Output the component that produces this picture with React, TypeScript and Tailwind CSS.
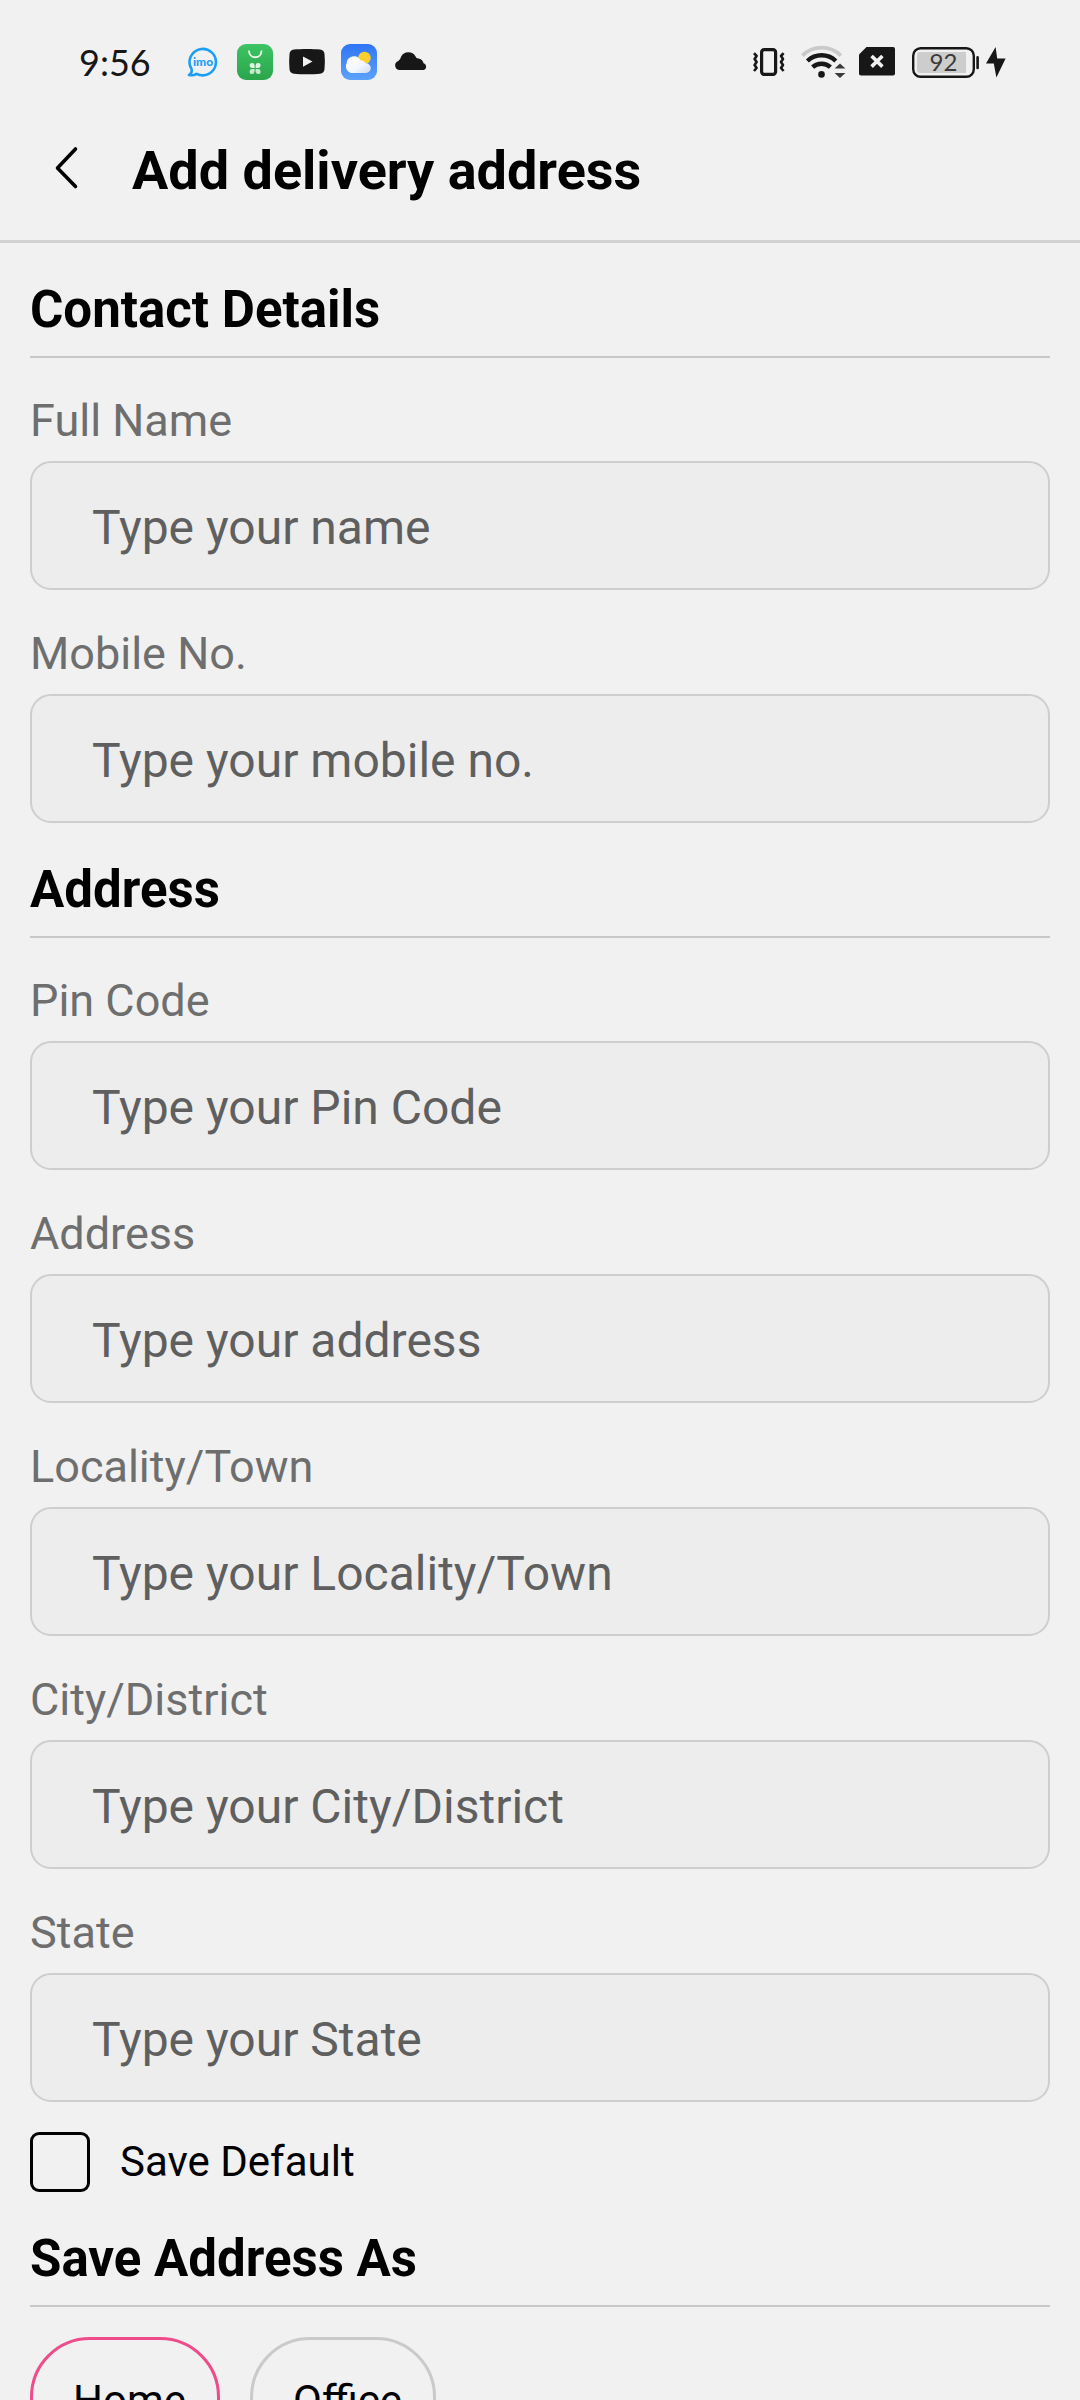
import React, { useState } from "react";

type FieldData = { id: string; label: string; placeholder: string; type?: string };

const contactFields: FieldData[] = [
  { id: "name", label: "Full Name", placeholder: "Type your name" },
  { id: "mobile", label: "Mobile No.", placeholder: "Type your mobile no.", type: "tel" },
];

const addressFields: FieldData[] = [
  { id: "pin", label: "Pin Code", placeholder: "Type your Pin Code" },
  { id: "address", label: "Address", placeholder: "Type your address" },
  { id: "locality", label: "Locality/Town", placeholder: "Type your Locality/Town" },
  { id: "city", label: "City/District", placeholder: "Type your City/District" },
  { id: "state", label: "State", placeholder: "Type your State" },
];

function StatusBar() {
  return (
    <div className="flex h-[124px] shrink-0 items-center justify-between pl-[79px] pr-[74px] text-[#171717]">
      <div className="flex items-center">
        <span className="w-[108px] font-['Lato',sans-serif] text-[36px] leading-[44px]">9:56</span>
        <div className="flex items-center gap-4">
          {/* imo */}
          <svg width="34" height="36" viewBox="0 0 34 36" aria-label="imo">
            <path
              d="M4.6 25.2A13.2 13.2 0 1 1 9.6 29.8C7.4 31.2 4.6 31.6 2 31C4.4 29.6 5.2 27.8 4.6 25.2Z"
              fill="none"
              stroke="#1b9ff5"
              strokeWidth="2.6"
              strokeLinejoin="round"
            />
            <text
              x="16"
              y="22"
              textAnchor="middle"
              fontFamily="Lato, sans-serif"
              fontWeight="900"
              fontSize="12"
              fill="#1b9ff5"
            >
              imo
            </text>
          </svg>
          {/* app market */}
          <svg width="36" height="36" viewBox="0 0 36 36" aria-hidden="true">
            <defs>
              <linearGradient id="market" x1="0" y1="0" x2="0" y2="1">
                <stop offset="0" stopColor="#3dc463" />
                <stop offset="1" stopColor="#2aa54b" />
              </linearGradient>
            </defs>
            <rect width="36" height="36" rx="9" fill="url(#market)" />
            <path d="M12 6.5C12 15.5 24.5 15.5 24.5 6.5" fill="none" stroke="#e9fbe9" strokeWidth="1.8" />
            <g fill="#dff5e2">
              <path d="M17.6 24H15.2A2.5 2.5 0 1 1 17.6 21.4Z" />
              <path d="M18.6 24H21A2.5 2.5 0 1 0 18.6 21.4Z" />
              <path d="M17.6 25H15.2A2.5 2.5 0 1 0 17.6 27.6Z" opacity=".85" />
              <path d="M18.6 25H21A2.5 2.5 0 1 1 18.6 27.6Z" opacity=".85" />
            </g>
          </svg>
          {/* video */}
          <svg width="36" height="36" viewBox="0 0 36 36" aria-hidden="true">
            <path
              d="M5 5.6C12 4.8 24 4.8 31 5.6C34 6 35.2 7.4 35.5 10C36 15 36 20 35.5 25C35.2 28 34 29.3 31 29.7C24 30.5 12 30.5 5 29.7C2 29.3 .8 28 .5 25C0 20 0 15 .5 10C.8 7.4 2 6 5 5.6Z"
              fill="#171717"
            />
            <path d="M14 12.5L23.5 17.6L14 22.8Z" fill="#f1f1f1" />
          </svg>
          {/* weather */}
          <svg width="36" height="36" viewBox="0 0 36 36" aria-hidden="true">
            <defs>
              <linearGradient id="sky" x1="0" y1="0" x2="0" y2="1">
                <stop offset="0" stopColor="#2f74f6" />
                <stop offset="1" stopColor="#5ba2fb" />
              </linearGradient>
              <linearGradient id="puff" x1="0" y1="0" x2="1" y2="1">
                <stop offset="0" stopColor="#ffffff" />
                <stop offset=".6" stopColor="#f2f6fd" />
                <stop offset="1" stopColor="#c9d9f2" />
              </linearGradient>
            </defs>
            <rect width="36" height="36" rx="9" fill="url(#sky)" />
            <circle cx="23.5" cy="14" r="6.2" fill="#fdcf2c" />
            <path
              d="M11.5 29A6.6 6.6 0 0 1 5.6 19.5A7.4 7.4 0 0 1 19.5 16.2A5 5 0 0 1 24.4 19.2A5.2 5.2 0 0 1 29.8 24A5 5 0 0 1 25 29Z"
              fill="url(#puff)"
            />
          </svg>
          {/* cloud */}
          <svg width="36" height="36" viewBox="0 0 36 36" aria-hidden="true">
            <path
              d="M6 26A4.6 4.6 0 0 1 4.8 17.3C6.2 16.4 7 16 8 12.8A8.4 8.4 0 0 1 22.6 12.4C23.3 14 24 14.3 25.4 14.4A6.6 6.6 0 0 1 30.6 19.3C33.8 20.2 34.2 25.6 30.6 26Z"
              fill="#171717"
            />
          </svg>
        </div>
      </div>

      <div className="flex items-center">
        {/* vibrate */}
        <svg width="32" height="36" viewBox="0 0 32 36" aria-hidden="true" className="mr-4">
          <rect x="8.6" y="5.6" width="14" height="24.8" rx="2.6" fill="none" stroke="#171717" strokeWidth="3.2" />
          <g fill="none" stroke="#171717" strokeWidth="2.6" strokeLinejoin="round">
            <path d="M1 9.2L3.6 12L1.6 15L3.6 18L1.6 21L3.6 24L1 27" />
            <path d="M30.6 9.2L28 12L30 15L28 18L30 21L28 24L30.6 27" />
          </g>
        </svg>
        {/* wifi */}
        <svg width="46" height="36" viewBox="0 0 46 36" aria-hidden="true" className="mr-3">
          <path d="M1.4 11.6A27 27 0 0 1 39.8 11.6" fill="none" stroke="#cacaca" strokeWidth="3.8" />
          <path d="M6.4 17A20.5 20.5 0 0 1 34.8 17" fill="none" stroke="#171717" strokeWidth="4.4" />
          <path d="M11.6 23.2A13 13 0 0 1 29.4 23.2" fill="none" stroke="#171717" strokeWidth="4.4" />
          <circle cx="20.5" cy="30.4" r="3.3" fill="#171717" />
          <path d="M33.6 24.6L39 19.6L44.4 24.6Z M33.6 29L39 34L44.4 29Z" fill="#3a3a3a" />
        </svg>
        {/* missing SIM */}
        <svg width="36" height="36" viewBox="0 0 36 36" aria-hidden="true" className="mr-[17px]">
          <path d="M7.5 3H34A2 2 0 0 1 36 5V29.5A2 2 0 0 1 34 31.5H2A2 2 0 0 1 0 29.5V10.5Z" fill="#171717" />
          <path d="M12.6 12L23.4 22.6M23.4 12L12.6 22.6" stroke="#f1f1f1" strokeWidth="3.6" />
        </svg>
        {/* battery */}
        <svg width="68" height="36" viewBox="0 0 68 36" aria-label="92 percent" className="mr-[6px]">
          <rect x="1.2" y="4.2" width="60.6" height="28.6" rx="7.5" fill="none" stroke="#171717" strokeWidth="2.4" />
          <path d="M8 8H54V29H8A3 3 0 0 1 5 26V11A3 3 0 0 1 8 8Z" fill="#cdcdcd" />
          <path d="M65.6 13.4V24" stroke="#171717" strokeWidth="2.6" strokeLinecap="round" />
          <text
            x="31.5"
            y="27.4"
            textAnchor="middle"
            fontFamily="Lato, sans-serif"
            fontSize="24"
            fill="#3a3a3a"
          >
            92
          </text>
        </svg>
        <svg width="20" height="36" viewBox="0 0 20 36" aria-hidden="true">
          <path d="M9.6 3L0 19.4H7.8L10.4 33.4L19.6 14.4H11.2Z" fill="#171717" />
        </svg>
      </div>
    </div>
  );
}

function SectionTitle({ children }: { children: React.ReactNode }) {
  return (
    <h2 className="mt-[37px] border-b-2 border-[#c8c8c8] pb-4 text-[51px] leading-[60px] font-bold">
      {children}
    </h2>
  );
}

function Field({ id, label, placeholder, type = "text" }: FieldData) {
  return (
    <div className="flex flex-col gap-3">
      <label htmlFor={id} className="text-[45px] leading-[56px] text-[#6e6e6e]">
        {label}
      </label>
      <input
        id={id}
        type={type}
        placeholder={placeholder}
        className="h-[129px] w-full rounded-[21px] border-2 border-[#cecece] bg-[#ededed] px-[60px] pt-[3px] text-[48px] leading-[56px] text-black outline-none placeholder:text-[#5f5f5f]"
      />
    </div>
  );
}

function FieldGroup({ fields }: { fields: FieldData[] }) {
  return (
    <div className="mt-[35px] flex flex-col gap-9">
      {fields.map((f) => (
        <Field key={f.id} {...f} />
      ))}
    </div>
  );
}

export default function App() {
  const [kind, setKind] = useState("Home");
  return (
    <div className="flex h-screen flex-col overflow-hidden bg-[#f1f1f1] font-['Roboto',sans-serif] text-black">
      <StatusBar />
      <header className="flex shrink-0 items-center border-b-3 border-[#d2d2d2] pt-[15px] pb-[37px] pl-[30px]">
        <button type="button" aria-label="Back" className="mr-[30px]">
          <svg width="72" height="64" viewBox="0 0 72 64">
            <path
              d="M45.5 10L27.5 29L45.5 47.5"
              fill="none"
              stroke="#000"
              strokeWidth="3.6"
              strokeLinecap="round"
              strokeLinejoin="round"
            />
          </svg>
        </button>
        <h1 className="text-[54px] leading-[64px] font-bold">Add delivery address</h1>
      </header>
      <main className="min-h-0 flex-1 overflow-y-auto px-[30px] [scrollbar-width:none]">
        <form>
          <SectionTitle>Contact Details</SectionTitle>
          <FieldGroup fields={contactFields} />
          <SectionTitle>Address</SectionTitle>
          <FieldGroup fields={addressFields} />
          <label className="mt-[30px] flex items-center gap-[30px] text-[42px] leading-[50px]">
            <input
              type="checkbox"
              className="size-[60px] appearance-none rounded-[9px] border-3 border-black checked:bg-black"
            />
            Save Default
          </label>
          <SectionTitle>Save Address As</SectionTitle>
          <div className="mt-[30px] flex gap-[30px] pb-[60px]">
            {["Home", "Office"].map((k) => (
              <button
                key={k}
                type="button"
                onClick={() => setKind(k)}
                className={
                  "rounded-[60px] border-3 py-9 pr-[31px] pl-10 text-[42px] leading-[50px] " +
                  (k === kind ? "border-[#ee4c8b]" : "border-[#cacaca]")
                }
              >
                {k}
              </button>
            ))}
          </div>
        </form>
      </main>
    </div>
  );
}
